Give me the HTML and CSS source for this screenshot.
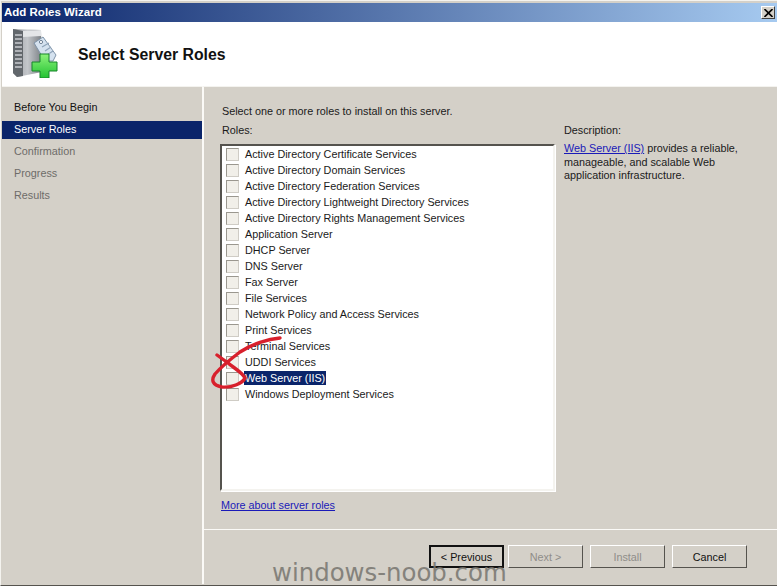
FILE: index.html
```html
<!DOCTYPE html>
<html lang="en">
<head>
<meta charset="utf-8">
<title>Add Roles Wizard</title>
<link rel="stylesheet" href="styles.css">
</head>
<body>
<div class="window">
  <div class="titlebar">
    <span class="title">Add Roles Wizard</span>
    <span class="close"><svg width="9" height="8" viewBox="0 0 9 8"><path d="M0.5 0 L8.5 8 M8.5 0 L0.5 8" stroke="#000" stroke-width="1.6" fill="none"/></svg></span>
  </div>
  <header class="header">
    <svg class="logo" width="48" height="50" viewBox="0 0 48 50">
      <defs>
        <linearGradient id="srv" x1="0" x2="1" y1="0" y2="0"><stop offset="0" stop-color="#9a9ea3"/><stop offset="0.5" stop-color="#c3c6ca"/><stop offset="1" stop-color="#7b8085"/></linearGradient>
        <linearGradient id="grn" x1="0" x2="0" y1="0" y2="1"><stop offset="0" stop-color="#8cf27a"/><stop offset="1" stop-color="#22c232"/></linearGradient>
      </defs>
      <path d="M1 1 L29 2 L30 44 L5 49 L1 45 Z" fill="url(#srv)"/>
      <path d="M1 1 L11 3 L11 48 L5 49 L1 45 Z" fill="#62676c"/>
      <path d="M3 7 H10 M3 11 H10 M3 15 H10 M3 19 H10 M3 23 H10 M3 27 H10 M3 31 H10 M3 35 H10 M3 39 H10" stroke="#c9ccd0" stroke-width="1.4"/>
      <path d="M11 3 L29 2 L29 8 L11 9 Z" fill="#e4e6e8"/>
      <path d="M22 15 L31 9 L44 27 L41 33 L33 33 Z" fill="#d5e2ef" stroke="#7f93a8"/>
      <circle cx="29" cy="14" r="1.6" fill="#fff" stroke="#6f8296"/>
      <path d="M30 19 L37 15 M33 23 L39 19 M35 27 L41 23" stroke="#8ea3b8" stroke-width="1.2"/>
      <path d="M28 26 H37 V34 H45 V43 H37 V50 H28 V43 H20 V34 H28 Z" fill="url(#grn)" stroke="#17852a"/>
    </svg>
    <h1>Select Server Roles</h1>
  </header>
  <div class="main">
    <nav class="sidebar">
      <div class="step done">Before You Begin</div>
      <div class="step current">Server Roles</div>
      <div class="step">Confirmation</div>
      <div class="step">Progress</div>
      <div class="step">Results</div>
    </nav>
    <section class="content">
      <p class="intro">Select one or more roles to install on this server.</p>
      <div class="columns">
        <div class="roles">
          <div class="label">Roles:</div>
          <ul class="list">
            <li class="role"><span class="check"></span><span class="name">Active Directory Certificate Services</span></li>
            <li class="role"><span class="check"></span><span class="name">Active Directory Domain Services</span></li>
            <li class="role"><span class="check"></span><span class="name">Active Directory Federation Services</span></li>
            <li class="role"><span class="check"></span><span class="name">Active Directory Lightweight Directory Services</span></li>
            <li class="role"><span class="check"></span><span class="name">Active Directory Rights Management Services</span></li>
            <li class="role"><span class="check"></span><span class="name">Application Server</span></li>
            <li class="role"><span class="check"></span><span class="name">DHCP Server</span></li>
            <li class="role"><span class="check"></span><span class="name">DNS Server</span></li>
            <li class="role"><span class="check"></span><span class="name">Fax Server</span></li>
            <li class="role"><span class="check"></span><span class="name">File Services</span></li>
            <li class="role"><span class="check"></span><span class="name">Network Policy and Access Services</span></li>
            <li class="role"><span class="check"></span><span class="name">Print Services</span></li>
            <li class="role"><span class="check"></span><span class="name">Terminal Services</span></li>
            <li class="role"><span class="check"></span><span class="name">UDDI Services</span></li>
            <li class="role"><span class="check"></span><span class="name selected">Web Server (IIS)</span></li>
            <li class="role"><span class="check"></span><span class="name">Windows Deployment Services</span></li>
          </ul>
          <a class="link more" href="#">More about server roles</a>
        </div>
        <aside class="description">
          <div class="label">Description:</div>
          <p class="desc-text"><a class="link" href="#">Web Server (IIS)</a> provides a reliable, manageable, and scalable Web application infrastructure.</p>
        </aside>
      </div>
      <footer class="footer">
        <button class="btn default">&lt; Previous</button>
        <button class="btn" disabled>Next &gt;</button>
        <button class="btn" disabled>Install</button>
        <button class="btn">Cancel</button>
      </footer>
    </section>
  </div>
  <svg class="scribble" width="80" height="60" viewBox="0 0 80 60">
    <path d="M70 2 C58 3 42 8 30 16 C22 22 12 30 5 38 C1 44 2 49 12 51 C22 52 33 47 35 42 C33 37 24 32 18 27 L7 19" fill="none" stroke="#d8202c" stroke-width="3.4" stroke-linecap="round" stroke-linejoin="round"/>
  </svg>
  <div class="watermark">windows-noob.com</div>
</div>
</body>
</html>
```
FILE: styles.css
```css
* { box-sizing: border-box; }
html, body { margin: 0; padding: 0; }
body { width: 777px; height: 586px; overflow: hidden; background: #d4d0c8; font-family: "Liberation Sans", sans-serif; font-size: 10.8px; color: #1a1a1a; }
.window { position: relative; width: 777px; height: 586px; display: flex; flex-direction: column; padding: 2px 0 1px 1px; background: #d4d0c8; border-top: 1px solid #f4f3ef; border-left: 1px solid #f4f3ef; border-bottom: 1px solid #55534e; }
.titlebar { height: 19px; flex: none; display: flex; align-items: center; justify-content: space-between; padding: 0 2px 0 2px; background: linear-gradient(90deg, #0a246a, #a6caf0); }
.title { color: #fff; font-weight: 700; font-size: 11.5px; padding-bottom: 2px; }
.close { width: 14px; height: 13px; display: flex; align-items: center; justify-content: center; background: #d4d0c8; border: 1px solid; border-color: #fff #404040 #404040 #fff; }
.header { height: 64px; flex: none; display: flex; align-items: center; gap: 18px; padding: 0 0 0 10px; background: #fff; }
.logo { flex: none; margin-bottom: 2px; }
.header h1 { margin: 2px 0 0; font-size: 15.8px; font-weight: 700; color: #111; }
.main { flex: 1; display: flex; min-height: 0; }
.sidebar { width: 200px; flex: none; padding-top: 10px; border-top: 1px solid #f4f3ef; }
.step { height: 22px; line-height: 20px; padding-left: 12px; color: #6e6c68; }
.step.done { color: #111; }
.step.current { background: #0a246a; color: #fff; height: 18px; line-height: 17px; margin: 2px 0; }
.content { flex: 1; display: flex; flex-direction: column; border-left: 2px solid #fbfaf7; border-top: 1px solid #f4f3ef; padding-top: 16px; }
.intro { margin: 0 0 0 18px; height: 20px; line-height: 16px; }
.columns { flex: 1; display: flex; padding-left: 16px; }
.roles { width: 335px; flex: none; }
.label { height: 15px; line-height: 15px; }
.roles .label { margin-bottom: 6px; padding-left: 2px; }
.list { list-style: none; margin: 0; padding: 0 0 0 4px; width: 335px; height: 347px; background: #fff; border: 2px solid; border-color: #55534e #f4f3ef #f4f3ef #55534e; box-shadow: 1px 1px 0 #fff; }
.role { height: 16px; display: flex; align-items: center; gap: 5px; white-space: nowrap; }
.check { width: 13px; height: 13px; flex: none; background: #f1efe9; border: 1px solid; border-color: #9a978f #cfccc5 #cfccc5 #9a978f; }
.name { padding: 0 1px; line-height: 14px; }
.name.selected { background: #0a246a; color: #fff; }
.link { color: #1a1ab8; text-decoration: underline; }
.more { display: block; margin: 7px 0 0 1px; line-height: 15px; }
.description { margin-left: 9px; flex: 1; }
.desc-text { margin: 4px 0 0; width: 195px; line-height: 13.5px; }
.footer { height: 55px; flex: none; display: flex; justify-content: flex-end; gap: 7px; padding: 15px 30px 0 0; border-top: 1px solid #fbfaf7; }
.btn { width: 75px; height: 23px; padding: 0; font: inherit; color: #111; background: #d4d0c8; border: 1px solid; border-color: #fff #55534e #55534e #fff; }
.btn.default { border: 2px solid #111; margin-right: -3px; }
.btn:disabled { color: #8f8d88; }
.scribble { position: absolute; left: 209px; top: 335px; }
.watermark { position: absolute; left: 271px; top: 557px; font-family: "DejaVu Sans", sans-serif; font-size: 24.4px; line-height: 30px; color: #77756f; opacity: 0.85; white-space: nowrap; }
```
